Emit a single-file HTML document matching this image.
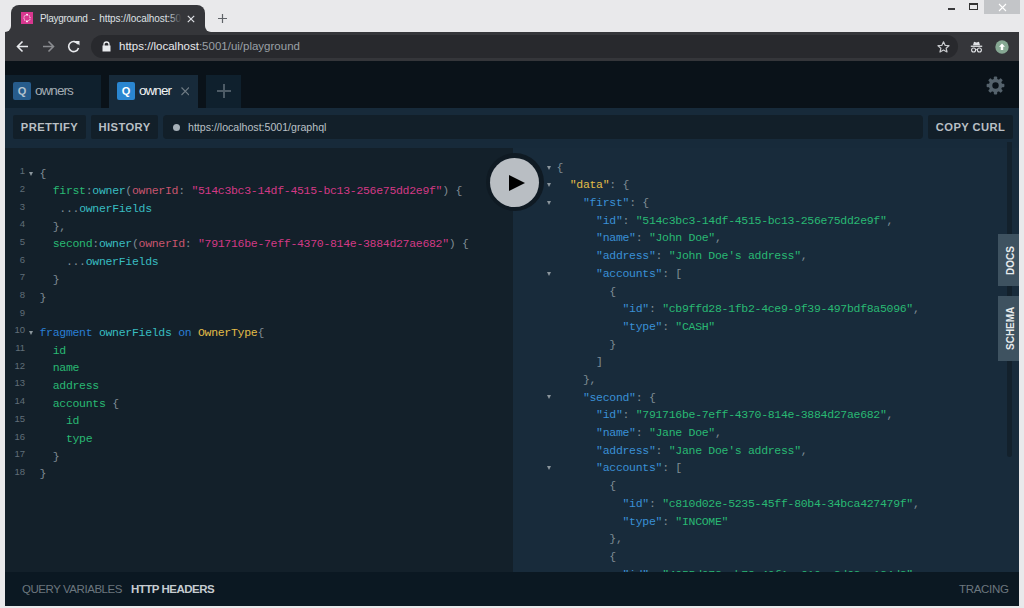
<!DOCTYPE html>
<html><head><meta charset="utf-8">
<style>
*{box-sizing:border-box;margin:0;padding:0}
svg{display:block}
html,body{width:1024px;height:608px;overflow:hidden;background:#e9e9eb;font-family:"Liberation Sans",sans-serif;position:relative}
.a{position:absolute}
.mono{font-family:"Liberation Mono",monospace;font-size:11.5px;letter-spacing:-0.3px;white-space:pre;line-height:17.65px}
/* chrome */
#ctab{left:11px;top:5px;width:194px;height:28px;background:#35363a;border-radius:8px 8px 0 0}
#win{left:5px;top:32px;width:1014px;height:574px;background:#35363a}
#omni{left:91px;top:35px;width:867px;height:23px;background:#28292d;border-radius:12px}
#pg{left:5px;top:61px;width:1014px;height:545px;background:#0a1219}
.tab{top:75px;height:33px}
.qic{width:18px;height:18px;border-radius:2px;font-size:11px;font-weight:bold;color:#fff;text-align:center;line-height:18px}
#tbar{left:5px;top:108px;width:1014px;height:40px;background:#172a3a}
.btn{top:115px;height:24px;background:#121f29;border-radius:2px;color:#b9bfc4;font-weight:bold;font-size:11.2px;letter-spacing:0.42px;line-height:24px;text-align:center}
#qed{left:5px;top:148px;width:508px;height:424px;background:#13202a}
#res{left:513px;top:148px;width:506px;height:424px;background:#182b3b}
#bot{left:5px;top:572px;width:1014px;height:34px;background:#0b1822}
.ln{color:#606e78;width:20px;text-align:right;font-family:"Liberation Sans",sans-serif;font-size:9.5px;line-height:17.65px}
.p{color:#7f8b93}
.pr{color:#29b973}
.df{color:#38bdc1}
.at{color:#c8556e}
.st{color:#d23985}
.kw{color:#2a7ed3}
.gd{color:#e2bd48}
.rk{color:#3a90d6}
.rv{color:#29b973}
.fold{width:0;height:0;border-left:2.5px solid transparent;border-right:2.5px solid transparent;border-top:4px solid #8a959c}
</style></head>
<body>
<!-- chrome title bar -->
<div class="a" id="ctab"></div>
<div class="a" style="left:5px;top:26px;width:6px;height:6px;background:#35363a"></div><div class="a" style="left:4px;top:25px;width:7px;height:7px;background:#e9e9eb;border-bottom-right-radius:6px"></div>
<div class="a" style="left:205px;top:26px;width:6px;height:6px;background:#35363a"></div><div class="a" style="left:205px;top:25px;width:7px;height:7px;background:#e9e9eb;border-bottom-left-radius:6px"></div>
<svg class="a" style="left:21px;top:12px" width="12" height="12" viewBox="0 0 12 12"><rect width="12" height="12" fill="#d8378f"/><path d="M6 2.6L9 4.3V7.7L6 9.4L3 7.7V4.3Z" stroke="#fff" stroke-width="0.9" fill="none" stroke-dasharray="1.2 0.9"/><circle cx="6" cy="2.6" r="0.9" fill="#fff"/><circle cx="6" cy="9.4" r="0.9" fill="#fff"/></svg>
<div class="a" style="left:40px;top:11px;width:142px;height:16px;overflow:hidden;white-space:nowrap;font-size:10px;letter-spacing:-0.08px;word-spacing:1.5px;color:#dfe1e5;line-height:16px"><span style="letter-spacing:-0.3px">Playground</span> - https://localhost:5001/ui/playground</div>
<div class="a" style="left:168px;top:8px;width:16px;height:20px;background:linear-gradient(90deg,rgba(53,54,58,0),#35363a 85%)"></div>
<svg class="a" style="left:187px;top:15px" width="8" height="8" viewBox="0 0 8 8"><path d="M0.8 0.8L7.2 7.2M7.2 0.8L0.8 7.2" stroke="#dfe1e5" stroke-width="1.2"/></svg>
<svg class="a" style="left:218px;top:14px" width="9" height="9" viewBox="0 0 9 9"><path d="M4.5 0V9M0 4.5H9" stroke="#5f6368" stroke-width="1.2"/></svg>
<!-- window buttons -->
<div class="a" style="left:948px;top:8px;width:7px;height:2px;background:#3a3a3c"></div>
<div class="a" style="left:969px;top:3px;width:9px;height:7px;border:1px solid #333;border-top-width:2px"></div>
<div class="a" style="left:984px;top:0;width:36px;height:14px;background:#c3c5c8"></div>
<svg class="a" style="left:998px;top:3px" width="9" height="9" viewBox="0 0 9 9"><path d="M1 1L8 8M8 1L1 8" stroke="#fff" stroke-width="1.1"/></svg>

<div class="a" id="win"></div>
<div class="a" id="omni"></div>
<!-- nav icons -->
<svg class="a" style="left:16px;top:40px" width="13" height="13" viewBox="0 0 13 13"><path d="M12 6.5H2M6.5 1.5L1.5 6.5L6.5 11.5" stroke="#e8eaed" stroke-width="1.6" fill="none"/></svg>
<svg class="a" style="left:42px;top:40px" width="13" height="13" viewBox="0 0 13 13"><path d="M1 6.5H11M6.5 1.5L11.5 6.5L6.5 11.5" stroke="#8a8c90" stroke-width="1.6" fill="none"/></svg>
<svg class="a" style="left:67px;top:40px" width="14" height="13" viewBox="0 0 14 13"><path d="M11 4A5 5 0 1 0 11.5 8" stroke="#e8eaed" stroke-width="1.6" fill="none"/><path d="M8 1H12.5V5.5Z" fill="#e8eaed"/></svg>
<svg class="a" style="left:102px;top:41px" width="9" height="11" viewBox="0 0 9 11"><path d="M2 5V3.5A2.5 2.5 0 0 1 7 3.5V5" stroke="#e8eaed" stroke-width="1.3" fill="none"/><rect x="0.5" y="4.5" width="8" height="6" fill="#e8eaed"/></svg>
<div class="a" style="left:119px;top:38px;font-size:11.5px;line-height:17px;color:#e8eaed;white-space:nowrap">https://localhost<span style="color:#9aa0a6">:5001/ui/playground</span></div>
<svg class="a" style="left:937px;top:41px" width="13" height="12" viewBox="0 0 13 12"><path d="M6.5 0.8L8.2 4.4L12 4.7L9.1 7.2L10 11L6.5 9L3 11L3.9 7.2L1 4.7L4.8 4.4Z" stroke="#c8cacd" stroke-width="1.2" fill="none" stroke-linejoin="round"/></svg>
<svg class="a" style="left:969.5px;top:41px" width="13" height="12" viewBox="0 0 13 12"><path d="M4 0.8L6.5 1.6L9 0.8L10 4.2H3Z" fill="#dfe1e4"/><rect x="0.8" y="4.6" width="11.4" height="1.3" fill="#dfe1e4"/><circle cx="3.6" cy="9" r="2" stroke="#dfe1e4" stroke-width="1.1" fill="none"/><circle cx="9.4" cy="9" r="2" stroke="#dfe1e4" stroke-width="1.1" fill="none"/><path d="M5.6 8.7H7.4" stroke="#dfe1e4" stroke-width="0.9"/></svg>
<svg class="a" style="left:995px;top:40px" width="14" height="14" viewBox="0 0 14 14"><circle cx="7" cy="7" r="6.7" fill="#86a893"/><path d="M7 3.5L10 6.8H8.2V10H5.8V6.8H4Z" fill="#fff"/></svg>

<!-- playground -->
<div class="a" id="pg"></div>
<div class="a tab" style="left:5px;width:96px;background:#0f202d"></div>
<div class="a qic" style="left:13px;top:82px;background:#275c8c;color:#b4c3cf">Q</div>
<div class="a" style="left:35px;top:82px;font-size:13.5px;letter-spacing:-0.95px;line-height:18px;color:#a3acb3">owners</div>
<div class="a tab" style="left:109px;width:89px;background:#172a3a"></div>
<div class="a qic" style="left:117px;top:82px;background:#2a86d1">Q</div>
<div class="a" style="left:139px;top:82px;font-size:13.5px;letter-spacing:-0.95px;line-height:18px;color:#f0f2f3">owner</div>
<svg class="a" style="left:180.5px;top:87px" width="8.5" height="8.5" viewBox="0 0 8.5 8.5"><path d="M0.5 0.5L8 8M8 0.5L0.5 8" stroke="#6f7b84" stroke-width="1.1"/></svg>
<div class="a tab" style="left:206px;width:35px;background:#0f202d"></div>
<svg class="a" style="left:217px;top:84px" width="14" height="14" viewBox="0 0 14 14"><path d="M7 0V14M0 7H14" stroke="#4d5b66" stroke-width="2"/></svg>
<svg class="a" style="left:985.5px;top:75.5px" width="19" height="19" viewBox="0 0 19 19"><g fill="#55626c"><circle cx="9.5" cy="9.5" r="6.7"/><rect x="7.8" y="0.6" width="3.4" height="17.8" rx="1"/><rect x="0.6" y="7.8" width="17.8" height="3.4" rx="1"/><rect x="7.8" y="0.6" width="3.4" height="17.8" rx="1" transform="rotate(45 9.5 9.5)"/><rect x="7.8" y="0.6" width="3.4" height="17.8" rx="1" transform="rotate(-45 9.5 9.5)"/></g><circle cx="9.5" cy="9.5" r="3.2" fill="#0a1219"/></svg>

<div class="a" id="tbar"></div>
<div class="a btn" style="left:13px;width:73px">PRETTIFY</div>
<div class="a btn" style="left:91px;width:67px">HISTORY</div>
<div class="a btn" style="left:163px;width:760px;border-radius:4px"></div>
<div class="a" style="left:173px;top:124px;width:7px;height:7px;border-radius:50%;background:#a6b0b8"></div>
<div class="a" style="left:188px;top:120px;font-size:10.6px;line-height:14px;color:#b9c0c6">https://localhost:5001/graphql</div>
<div class="a btn" style="left:928px;width:85px">COPY CURL</div>

<div class="a" id="qed"></div>
<div class="a" id="res"></div>
<div class="a" id="bot"></div>

<div class="a" style="left:22px;top:583px;font-size:11.5px;line-height:14px;color:#6b767e;letter-spacing:-0.45px;margin-top:-1px">QUERY VARIABLES</div>
<div class="a" style="left:131px;top:583px;font-size:11.5px;line-height:14px;color:#c6ccd1;font-weight:bold;letter-spacing:-0.5px;margin-top:-1px">HTTP HEADERS</div>
<div class="a" style="left:959px;top:583px;font-size:11.5px;line-height:14px;color:#6b767e;letter-spacing:-0.3px;margin-top:-1px">TRACING</div>

<!-- docs/schema -->
<div class="a" style="left:1007px;top:142px;width:5px;height:315px;background:#13212c;border-radius:0 0 3px 3px"></div>
<div class="a" style="left:998px;top:234px;width:21px;height:52px;background:#3e5260"></div>
<div class="a" style="left:998px;top:296px;width:21px;height:65px;background:#3e5260"></div>
<div class="a" style="left:1003.5px;top:275px;transform:rotate(-90deg);transform-origin:0 0;white-space:nowrap;font-size:10px;font-weight:bold;color:#e6eaec;line-height:13px">DOCS</div>
<div class="a" style="left:1003.5px;top:350px;transform:rotate(-90deg);transform-origin:0 0;white-space:nowrap;font-size:10px;font-weight:bold;color:#e6eaec;line-height:13px">SCHEMA</div>

<div class="a" style="left:5px;top:148px;width:507px;height:424px;overflow:hidden">
<div class="a ln" style="left:0;top:14.20px">1</div>
<div class="a fold" style="left:24px;top:23.50px"></div>
<div class="a mono" style="left:34.5px;top:16.70px"><span class="p">{</span></div>
<div class="a ln" style="left:0;top:31.89px">2</div>
<div class="a mono" style="left:34.5px;top:34.39px">  <span class="pr">first</span><span class="p">:</span><span class="df">owner</span><span class="p">(</span><span class="at">ownerId</span><span class="p">: </span><span class="st">&quot;514c3bc3-14df-4515-bc13-256e75dd2e9f&quot;</span><span class="p">) {</span></div>
<div class="a ln" style="left:0;top:49.58px">3</div>
<div class="a mono" style="left:34.5px;top:52.08px">   <span class="p">...</span><span class="df">ownerFields</span></div>
<div class="a ln" style="left:0;top:67.27px">4</div>
<div class="a mono" style="left:34.5px;top:69.77px">  <span class="p">},</span></div>
<div class="a ln" style="left:0;top:84.96px">5</div>
<div class="a mono" style="left:34.5px;top:87.46px">  <span class="pr">second</span><span class="p">:</span><span class="df">owner</span><span class="p">(</span><span class="at">ownerId</span><span class="p">: </span><span class="st">&quot;791716be-7eff-4370-814e-3884d27ae682&quot;</span><span class="p">) {</span></div>
<div class="a ln" style="left:0;top:102.65px">6</div>
<div class="a mono" style="left:34.5px;top:105.15px">    <span class="p">...</span><span class="df">ownerFields</span></div>
<div class="a ln" style="left:0;top:120.34px">7</div>
<div class="a mono" style="left:34.5px;top:122.84px">  <span class="p">}</span></div>
<div class="a ln" style="left:0;top:138.03px">8</div>
<div class="a mono" style="left:34.5px;top:140.53px"><span class="p">}</span></div>
<div class="a ln" style="left:0;top:155.72px">9</div>
<div class="a mono" style="left:34.5px;top:158.22px"></div>
<div class="a ln" style="left:0;top:173.41px">10</div>
<div class="a fold" style="left:24px;top:182.71px"></div>
<div class="a mono" style="left:34.5px;top:175.91px"><span class="kw">fragment</span> <span class="df">ownerFields</span> <span class="kw">on</span> <span class="gd">OwnerType</span><span class="p">{</span></div>
<div class="a ln" style="left:0;top:191.10px">11</div>
<div class="a mono" style="left:34.5px;top:193.60px">  <span class="pr">id</span></div>
<div class="a ln" style="left:0;top:208.79px">12</div>
<div class="a mono" style="left:34.5px;top:211.29px">  <span class="pr">name</span></div>
<div class="a ln" style="left:0;top:226.48px">13</div>
<div class="a mono" style="left:34.5px;top:228.98px">  <span class="pr">address</span></div>
<div class="a ln" style="left:0;top:244.17px">14</div>
<div class="a mono" style="left:34.5px;top:246.67px">  <span class="pr">accounts</span> <span class="p">{</span></div>
<div class="a ln" style="left:0;top:261.86px">15</div>
<div class="a mono" style="left:34.5px;top:264.36px">    <span class="pr">id</span></div>
<div class="a ln" style="left:0;top:279.55px">16</div>
<div class="a mono" style="left:34.5px;top:282.05px">    <span class="pr">type</span></div>
<div class="a ln" style="left:0;top:297.24px">17</div>
<div class="a mono" style="left:34.5px;top:299.74px">  <span class="p">}</span></div>
<div class="a ln" style="left:0;top:314.93px">18</div>
<div class="a mono" style="left:34.5px;top:317.43px"><span class="p">}</span></div>
</div>
<div class="a" style="left:512px;top:148px;width:507px;height:424px;overflow:hidden">
<div class="a fold" style="left:35px;top:17.50px"></div>
<div class="a mono" style="left:44.5px;top:10.70px"><span class="p">{</span></div>
<div class="a fold" style="left:35px;top:35.19px"></div>
<div class="a mono" style="left:44.5px;top:28.39px">  <span class="gd">&quot;data&quot;</span><span class="p">: </span><span class="p">{</span></div>
<div class="a fold" style="left:35px;top:52.88px"></div>
<div class="a mono" style="left:44.5px;top:46.08px">    <span class="rk">&quot;first&quot;</span><span class="p">: </span><span class="p">{</span></div>
<div class="a mono" style="left:44.5px;top:63.77px">      <span class="rk">&quot;id&quot;</span><span class="p">: </span><span class="rv">&quot;514c3bc3-14df-4515-bc13-256e75dd2e9f&quot;</span><span class="p">,</span></div>
<div class="a mono" style="left:44.5px;top:81.46px">      <span class="rk">&quot;name&quot;</span><span class="p">: </span><span class="rv">&quot;John Doe&quot;</span><span class="p">,</span></div>
<div class="a mono" style="left:44.5px;top:99.15px">      <span class="rk">&quot;address&quot;</span><span class="p">: </span><span class="rv">&quot;John Doe&#x27;s address&quot;</span><span class="p">,</span></div>
<div class="a fold" style="left:35px;top:123.64px"></div>
<div class="a mono" style="left:44.5px;top:116.84px">      <span class="rk">&quot;accounts&quot;</span><span class="p">: </span><span class="p">[</span></div>
<div class="a mono" style="left:44.5px;top:134.53px">        <span class="p">{</span></div>
<div class="a mono" style="left:44.5px;top:152.22px">          <span class="rk">&quot;id&quot;</span><span class="p">: </span><span class="rv">&quot;cb9ffd28-1fb2-4ce9-9f39-497bdf8a5096&quot;</span><span class="p">,</span></div>
<div class="a mono" style="left:44.5px;top:169.91px">          <span class="rk">&quot;type&quot;</span><span class="p">: </span><span class="rv">&quot;CASH&quot;</span><span class="p"></span></div>
<div class="a mono" style="left:44.5px;top:187.60px">        <span class="p">}</span></div>
<div class="a mono" style="left:44.5px;top:205.29px">      <span class="p">]</span></div>
<div class="a mono" style="left:44.5px;top:222.98px">    <span class="p">},</span></div>
<div class="a fold" style="left:35px;top:247.47px"></div>
<div class="a mono" style="left:44.5px;top:240.67px">    <span class="rk">&quot;second&quot;</span><span class="p">: </span><span class="p">{</span></div>
<div class="a mono" style="left:44.5px;top:258.36px">      <span class="rk">&quot;id&quot;</span><span class="p">: </span><span class="rv">&quot;791716be-7eff-4370-814e-3884d27ae682&quot;</span><span class="p">,</span></div>
<div class="a mono" style="left:44.5px;top:276.05px">      <span class="rk">&quot;name&quot;</span><span class="p">: </span><span class="rv">&quot;Jane Doe&quot;</span><span class="p">,</span></div>
<div class="a mono" style="left:44.5px;top:293.74px">      <span class="rk">&quot;address&quot;</span><span class="p">: </span><span class="rv">&quot;Jane Doe&#x27;s address&quot;</span><span class="p">,</span></div>
<div class="a fold" style="left:35px;top:318.23px"></div>
<div class="a mono" style="left:44.5px;top:311.43px">      <span class="rk">&quot;accounts&quot;</span><span class="p">: </span><span class="p">[</span></div>
<div class="a mono" style="left:44.5px;top:329.12px">        <span class="p">{</span></div>
<div class="a mono" style="left:44.5px;top:346.81px">          <span class="rk">&quot;id&quot;</span><span class="p">: </span><span class="rv">&quot;c810d02e-5235-45ff-80b4-34bca427479f&quot;</span><span class="p">,</span></div>
<div class="a mono" style="left:44.5px;top:364.50px">          <span class="rk">&quot;type&quot;</span><span class="p">: </span><span class="rv">&quot;INCOME&quot;</span><span class="p"></span></div>
<div class="a mono" style="left:44.5px;top:382.19px">        <span class="p">},</span></div>
<div class="a mono" style="left:44.5px;top:399.88px">        <span class="p">{</span></div>
<div class="a mono" style="left:44.5px;top:417.57px">          <span class="rk">&quot;id&quot;</span><span class="p">: </span><span class="rv">&quot;4055d072-cb78-40f1-a610-a2d62ec124d2&quot;</span><span class="p">,</span></div>
</div>
<!-- play button -->
<div class="a" style="left:486px;top:153px;width:58px;height:58px;border-radius:50%;background:#0f1a23"></div>
<div class="a" style="left:490px;top:158px;width:49px;height:49px;border-radius:50%;background:#b9bec3"></div>
<svg class="a" style="left:509px;top:175px" width="16" height="16" viewBox="0 0 16 16"><path d="M0 0L16 8L0 16Z" fill="#000"/></svg>

</body></html>
